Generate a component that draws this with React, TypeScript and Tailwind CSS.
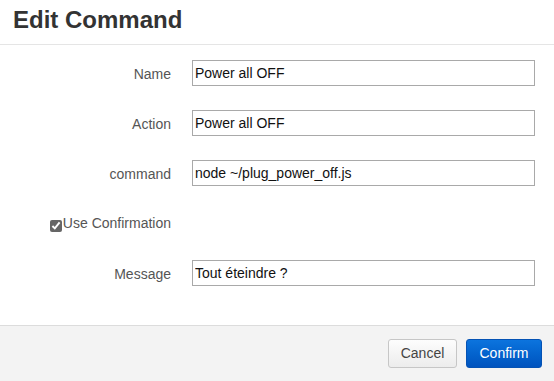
import { useState } from "react";

interface Field {
  label: string;
  value: string;
}

const fields: Field[] = [
  { label: "Name", value: "Power all OFF" },
  { label: "Action", value: "Power all OFF" },
  { label: "command", value: "node ~/plug_power_off.js" },
];

export default function App() {
  const [values, setValues] = useState(fields.map((f) => f.value));
  const [confirm, setConfirm] = useState(true);
  const [message, setMessage] = useState("Tout éteindre ?");

  return (
    <div className="w-[554px] h-[381px] bg-white flex flex-col font-[family-name:'Liberation_Sans',Arial,sans-serif] text-[#333]">
      <div className="h-[45px] border-b border-[#e5e5e5] px-[13px] pt-[8px]">
        <h1 className="text-[24px] font-bold leading-[24px] text-[#333]">Edit Command</h1>
      </div>

      <div className="flex-1 flex flex-col gap-[24px] pt-[15px]">
        {fields.map((f, i) => (
          <div key={f.label} className="flex items-center h-[26px]">
            <label className="w-[171px] text-right text-[14px] text-[#555] pt-[3px]">{f.label}</label>
            <input
              value={values[i]}
              onChange={(e) => setValues(values.map((v, j) => (j === i ? e.target.value : v)))}
              className="ml-[21px] w-[343px] h-[26px] border border-[#a9a9a9] px-[2px] text-[14px] text-[#111] outline-none"
            />
          </div>
        ))}

        <div className="flex items-center h-[26px]">
          <label className="w-[171px] flex justify-end items-center text-[14px] text-[#555]">
            <input
              type="checkbox"
              checked={confirm}
              onChange={(e) => setConfirm(e.target.checked)}
              className="w-[12px] h-[12px] mr-[1px] mt-[6px] accent-[#666]"
            />
            Use Confirmation
          </label>
        </div>

        <div className="flex items-center h-[26px]">
          <label className="w-[171px] text-right text-[14px] text-[#555] pt-[3px]">Message</label>
          <input
            value={message}
            onChange={(e) => setMessage(e.target.value)}
            className="ml-[21px] w-[343px] h-[26px] border border-[#a9a9a9] px-[2px] text-[14px] text-[#111] outline-none"
          />
        </div>
      </div>

      <div className="h-[56px] border-t border-[#dcdcdc] bg-[#f3f3f3] flex items-center justify-end gap-[9px] pr-[12px] pb-[1px]">
        <button className="w-[69px] h-[29px] rounded-[3px] border border-[#c6c6c6] bg-gradient-to-b from-[#fdfdfd] to-[#ececec] text-[14px] text-[#444]">
          Cancel
        </button>
        <button className="w-[76px] h-[29px] rounded-[3px] border border-[#0452b4] bg-gradient-to-b from-[#0c74de] to-[#0053be] text-[14px] text-white">
          Confirm
        </button>
      </div>
    </div>
  );
}
